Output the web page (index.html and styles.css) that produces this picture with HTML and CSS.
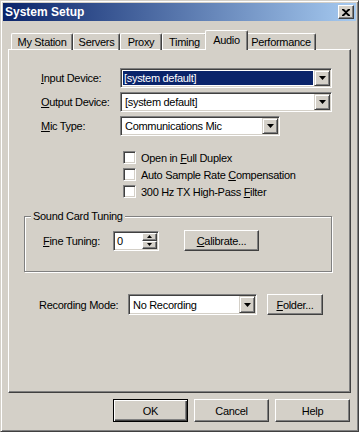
FILE: index.html
```html
<!DOCTYPE html>
<html>
	<head>
		<meta charset="utf-8">
		<title>System Setup</title>
		<link rel="stylesheet" href="styles.css">
	</head>
	<body>
		<div class="window">
			<!-- Заголовок окна -->
			<div class="titlebar">
				<span class="title">System Setup</span>
				<span class="close">
					<svg width="8" height="7" viewBox="0 0 8 7"><path d="M0 0h2l2 2 2-2h2v1L5 3.5 8 6v1H6L4 5 2 7H0V6l3-2.5L0 1z" fill="#000"/></svg>
				</span>
			</div>

			<div class="content">
				<!-- Вкладки -->
				<div class="tabs">
					<div class="tab tab-station">My Station</div>
					<div class="tab tab-servers">Servers</div>
					<div class="tab tab-proxy">Proxy</div>
					<div class="tab tab-timing">Timing</div>
					<div class="tab tab-audio tab-active">Audio</div>
					<div class="tab tab-perf">Performance</div>
				</div>

				<div class="panel">
					<!-- Устройства -->
					<div class="fields">
						<label><u>I</u>nput Device:</label>
						<div class="combo combo-wide">
							<span class="combo-text combo-selected">[system default]</span>
							<span class="arrow"><svg width="7" height="4" viewBox="0 0 7 4"><path d="M0 0h7L3.5 4z" fill="#000"/></svg></span>
						</div>
						<label><u>O</u>utput Device:</label>
						<div class="combo combo-wide">
							<span class="combo-text">[system default]</span>
							<span class="arrow"><svg width="7" height="4" viewBox="0 0 7 4"><path d="M0 0h7L3.5 4z" fill="#000"/></svg></span>
						</div>
						<label><u>M</u>ic Type:</label>
						<div class="combo combo-mic">
							<span class="combo-text">Communications Mic</span>
							<span class="arrow"><svg width="7" height="4" viewBox="0 0 7 4"><path d="M0 0h7L3.5 4z" fill="#000"/></svg></span>
						</div>
					</div>

					<!-- Флажки -->
					<div class="checks">
						<div class="check"><span class="box"></span><span>Open in <u>F</u>ull Duplex</span></div>
						<div class="check"><span class="box"></span><span>Auto Sample Rate <u>C</u>ompensation</span></div>
						<div class="check"><span class="box"></span><span>300 Hz TX High-Pass <u>F</u>ilter</span></div>
					</div>

					<!-- Группа настройки -->
					<div class="group">
						<span class="group-label">Sound Card Tuning</span>
						<div class="group-row">
							<label class="tune-label"><u>F</u>ine Tuning:</label>
							<div class="spinner">
								<span class="spin-text">0</span>
								<span class="spin-btns">
									<span class="spin-btn"><svg width="5" height="3" viewBox="0 0 5 3"><path d="M2.5 0L5 3H0z" fill="#000"/></svg></span>
									<span class="spin-btn"><svg width="5" height="3" viewBox="0 0 5 3"><path d="M0 0h5L2.5 3z" fill="#000"/></svg></span>
								</span>
							</div>
							<button class="btn btn-calibrate"><u>C</u>alibrate...</button>
						</div>
					</div>

					<!-- Режим записи -->
					<div class="record-row">
						<label class="record-label">Recording Mode:</label>
						<div class="combo combo-record">
							<span class="combo-text">No Recording</span>
							<span class="arrow"><svg width="7" height="4" viewBox="0 0 7 4"><path d="M0 0h7L3.5 4z" fill="#000"/></svg></span>
						</div>
						<button class="btn btn-folder"><u>F</u>older...</button>
					</div>
				</div>

				<!-- Кнопки диалога -->
				<div class="buttons">
					<button class="btn btn-dialog btn-default">OK</button>
					<button class="btn btn-dialog">Cancel</button>
					<button class="btn btn-dialog">Help</button>
				</div>
			</div>
		</div>
	</body>
</html>
```
FILE: styles.css
```css
body {
	margin: 0;
	font-family: "Liberation Sans", Arial, sans-serif;
	font-size: 11px;
	letter-spacing: -0.3px;
	color: #000;
}
u {
	text-decoration: underline;
	text-underline-offset: 1px;
}
/* Окно */
.window {
	width: 359px;
	height: 432px;
	box-sizing: border-box;
	background: #D4D0C8;
	border: 1px solid;
	border-color: #D4D0C8 #404040 #404040 #D4D0C8;
	box-shadow: inset 1px 1px #fff, inset -1px -1px #808080;
	padding: 2px;
}
.titlebar {
	height: 18px;
	display: flex;
	align-items: center;
	justify-content: space-between;
	padding: 0 2px 0 2px;
	background: linear-gradient(to right, #0A246A, #A6CAF0);
}
.title {
	color: #fff;
	font-weight: bold;
	font-size: 12px;
	letter-spacing: 0;
}
.close {
	width: 16px;
	height: 14px;
	box-sizing: border-box;
	display: flex;
	align-items: center;
	justify-content: center;
	background: #D4D0C8;
	border: 1px solid;
	border-color: #fff #404040 #404040 #fff;
	box-shadow: inset -1px -1px #808080;
}
.content {
	padding: 9px 5px 0 5px;
}
/* Вкладки */
.tabs {
	display: flex;
	align-items: flex-end;
	height: 20px;
	padding-left: 3px;
	margin-bottom: -1px;
}
.tab {
	height: 17px;
	box-sizing: border-box;
	display: flex;
	align-items: center;
	justify-content: center;
	border: 1px solid;
	border-bottom: none;
	border-color: #fff #404040 #404040 #fff;
	border-radius: 2px 2px 0 0;
	box-shadow: inset -1px 0 #808080;
}
.tab-station { width: 62px; }
.tab-servers { width: 47px; }
.tab-proxy { width: 42px; }
.tab-timing { width: 45px; }
.tab-audio { width: 39px; }
.tab-perf { width: 70px; }
.tab-active {
	position: relative;
	z-index: 1;
	width: 43px;
	height: 20px;
	margin: 0 -2px;
	padding-bottom: 2px;
	background: #D4D0C8;
}
.panel {
	height: 344px;
	box-sizing: border-box;
	border: 1px solid;
	border-color: #fff #404040 #404040 #fff;
	box-shadow: inset -1px -1px #808080;
	padding: 18px 0 0 15px;
}
/* Поля устройств */
.fields {
	display: grid;
	grid-template-columns: 79px auto;
	row-gap: 4px;
	align-items: center;
	margin-left: 17px;
}
.combo {
	height: 20px;
	box-sizing: border-box;
	display: flex;
	padding: 1px;
	background: #fff;
	border: 1px solid;
	border-color: #808080 #fff #fff #808080;
	box-shadow: inset 1px 1px #404040, inset -1px -1px #D4D0C8;
}
.combo-wide { width: 212px; }
.combo-mic { width: 160px; }
.combo-record { width: 129px; height: 21px; }
.combo-text {
	flex: 1;
	display: flex;
	align-items: center;
	padding-left: 2px;
	margin: 1px;
}
.combo-selected {
	background: #0A246A;
	color: #fff;
	padding-left: 1px;
}
.arrow {
	width: 16px;
	box-sizing: border-box;
	display: flex;
	align-items: center;
	justify-content: center;
	background: #D4D0C8;
	border: 1px solid;
	border-color: #D4D0C8 #404040 #404040 #D4D0C8;
	box-shadow: inset 1px 1px #fff, inset -1px -1px #808080;
}
/* Флажки */
.checks {
	margin: 15px 0 0 99px;
	display: flex;
	flex-direction: column;
	gap: 4px;
}
.check {
	height: 13px;
	display: flex;
	align-items: center;
}
.box {
	width: 13px;
	height: 13px;
	box-sizing: border-box;
	margin-right: 5px;
	background: #fff;
	border: 1px solid;
	border-color: #808080 #fff #fff #808080;
	box-shadow: inset 1px 1px #404040, inset -1px -1px #D4D0C8;
}
/* Группа */
.group {
	position: relative;
	width: 308px;
	height: 56px;
	box-sizing: border-box;
	margin-top: 18px;
	border: 1px solid #808080;
	box-shadow: inset 1px 1px #fff, 1px 1px #fff;
	padding: 13px 0 0 18px;
}
.group-label {
	position: absolute;
	top: -7px;
	left: 6px;
	padding: 0 2px;
	background: #D4D0C8;
}
.group-row {
	display: flex;
	align-items: center;
}
.tune-label { width: 70px; }
.spinner {
	width: 46px;
	height: 20px;
	box-sizing: border-box;
	display: flex;
	padding: 1px;
	background: #fff;
	border: 1px solid;
	border-color: #808080 #fff #fff #808080;
	box-shadow: inset 1px 1px #404040, inset -1px -1px #D4D0C8;
}
.spin-text {
	flex: 1;
	padding-left: 2px;
	display: flex;
	align-items: center;
}
.spin-btns {
	width: 15px;
	display: flex;
	flex-direction: column;
}
.spin-btn {
	flex: 1;
	box-sizing: border-box;
	display: flex;
	align-items: center;
	justify-content: center;
	background: #D4D0C8;
	border: 1px solid;
	border-color: #fff #404040 #404040 #fff;
	box-shadow: inset -1px -1px #808080;
}
/* Кнопки */
.btn {
	box-sizing: border-box;
	font-family: inherit;
	font-size: 11px;
	letter-spacing: -0.3px;
	color: #000;
	background: #D4D0C8;
	padding: 0;
	border: 1px solid;
	border-color: #fff #404040 #404040 #fff;
	box-shadow: inset -1px -1px #808080;
}
.btn-calibrate {
	width: 75px;
	height: 21px;
	margin-left: 25px;
}
.record-row {
	display: flex;
	align-items: center;
	margin: 22px 0 0 15px;
}
.record-label { width: 89px; }
.btn-folder {
	width: 56px;
	height: 21px;
	margin-left: 10px;
}
.buttons {
	display: flex;
	justify-content: flex-end;
	gap: 6px;
	margin-top: 6px;
	padding-right: 1px;
}
.btn-dialog {
	width: 75px;
	height: 23px;
}
.btn-default {
	border: 1px solid #000;
	box-shadow: inset 1px 1px #fff, inset -1px -1px #404040, inset -2px -2px #808080;
}
```
